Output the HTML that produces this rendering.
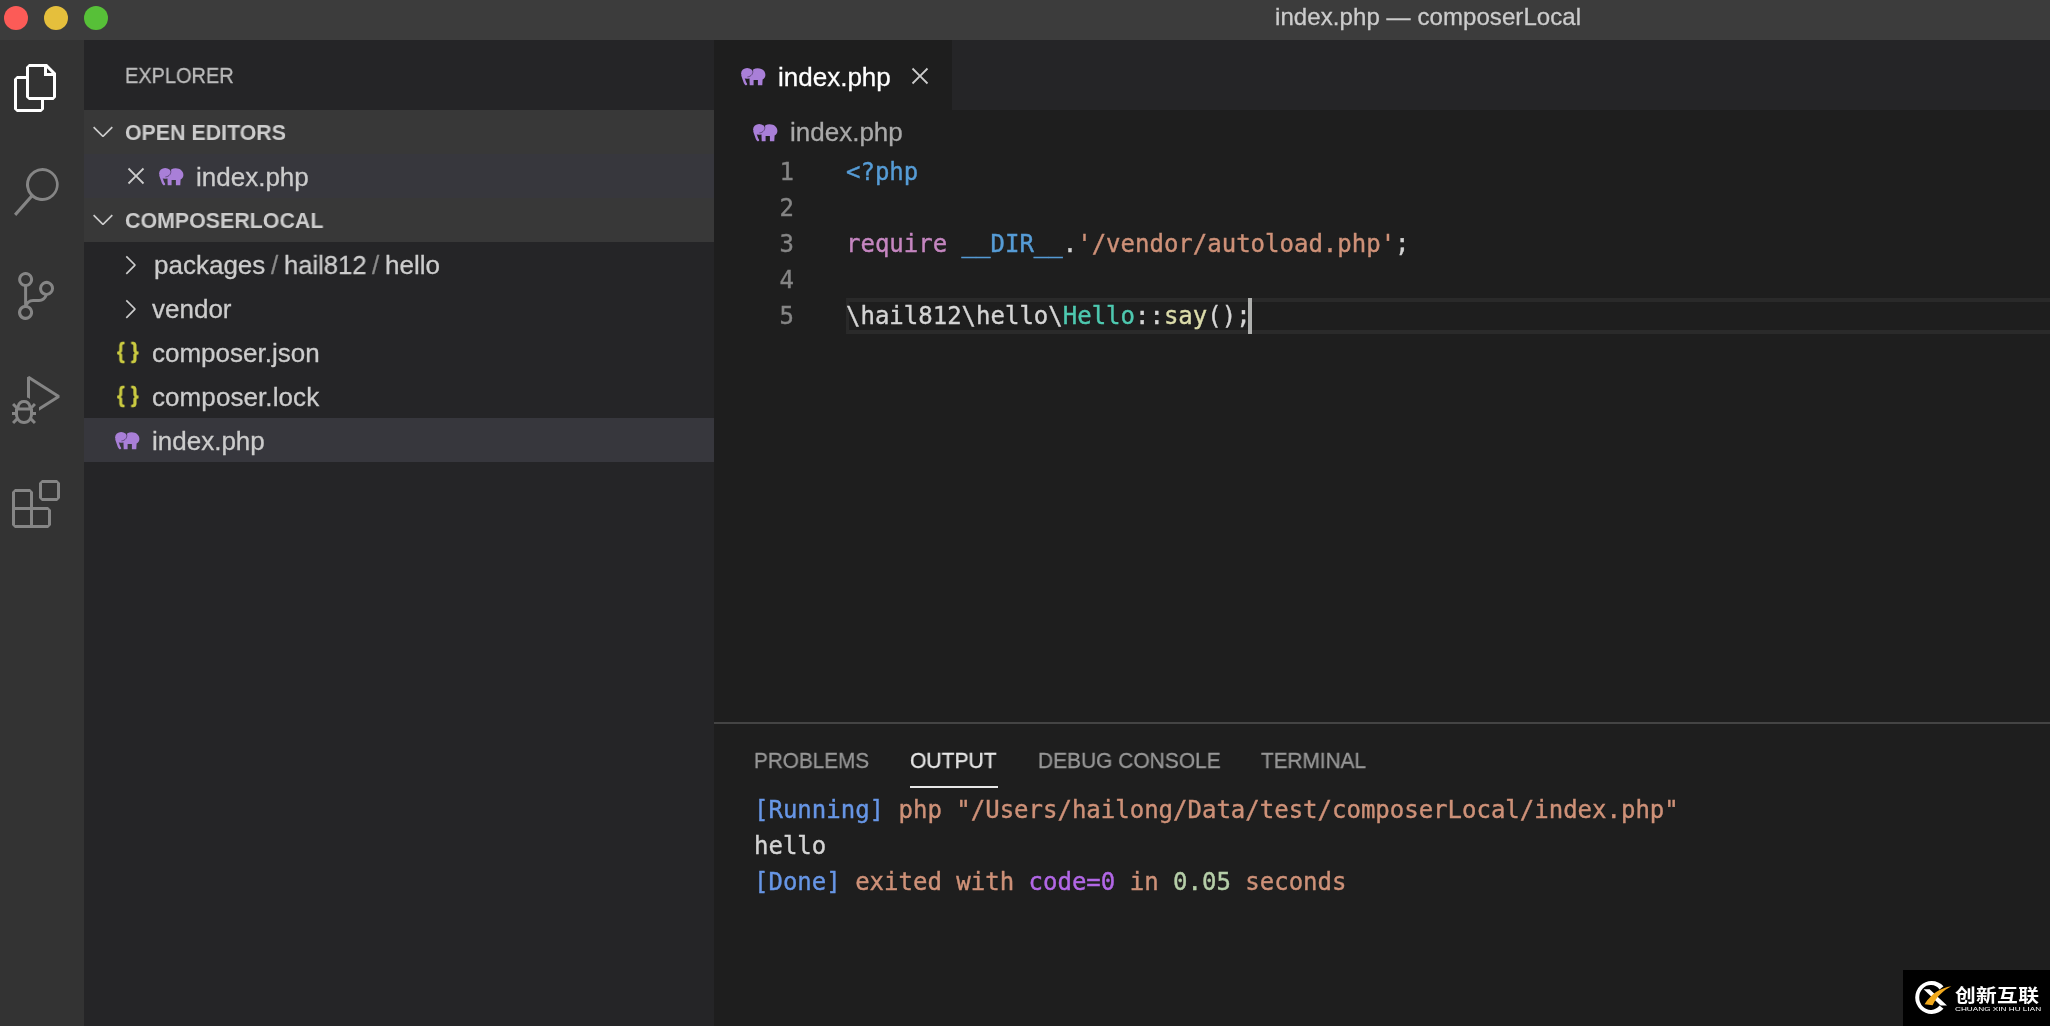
<!DOCTYPE html>
<html lang="en">
<head>
<meta charset="utf-8">
<title>index.php — composerLocal</title>
<style>
*{box-sizing:border-box;margin:0;padding:0}
html,body{width:2050px;height:1026px;overflow:hidden;background:#1e1e1e}
body{position:relative;font-family:"Liberation Sans",sans-serif;color:#cccccc;-webkit-font-smoothing:antialiased}
.abs{position:absolute}
.t,.mono,.ln{will-change:transform}
.t{position:absolute;white-space:pre;line-height:1;transform-origin:0 0}
/* regions */
#titlebar{left:0;top:0;width:2050px;height:40px;background:#3c3c3c}
#activity{left:0;top:40px;width:84px;height:986px;background:#333333}
#sidebar{left:84px;top:40px;width:630px;height:986px;background:#252527}
#sechead{left:84px;top:110px;width:630px;height:132px;background:#383838}
#selrow0{left:84px;top:154px;width:630px;height:44px;background:#37373d}
#selrow{left:84px;top:418px;width:630px;height:44px;background:#37373d}
#tabbar{left:714px;top:40px;width:1336px;height:70px;background:#252527}
#tab{left:714px;top:40px;width:238px;height:70px;background:#1e1e1e}
#panelborder{left:714px;top:722px;width:1336px;height:2px;background:#444444}
.ui{font-size:26px;color:#cccccc;-webkit-text-stroke:0.3px}
.mono,.ln{-webkit-text-stroke:0.4px}
.mono{font-family:"DejaVu Sans Mono","Liberation Mono",monospace;font-size:24px;line-height:36px;position:absolute;white-space:pre;color:#d4d4d4}
.ln{font-family:"DejaVu Sans Mono","Liberation Mono",monospace;font-size:24px;line-height:36px;position:absolute;color:#858585;width:40px;text-align:right;left:754px}
.sec{font-size:22px;font-weight:bold;color:#cccccc}
#title,#explorer,.ptab,#tabtext,#bctext{-webkit-text-stroke:0.3px}
#br1,#br2{-webkit-text-stroke:0.4px}
.ptab{font-size:22px;color:#979797}
</style>
</head>
<body>
<!-- backgrounds -->
<div class="abs" id="titlebar"></div>
<div class="abs" id="activity"></div>
<div class="abs" id="sidebar"></div>
<div class="abs" id="sechead"></div>
<div class="abs" id="selrow0"></div>
<div class="abs" id="selrow"></div>
<div class="abs" id="tabbar"></div>
<div class="abs" id="tab"></div>
<div class="abs" id="panelborder"></div>

<!-- title bar -->
<div class="abs" style="left:4px;top:6px;width:24px;height:24px;border-radius:50%;background:#fc5b57"></div>
<div class="abs" style="left:44px;top:6px;width:24px;height:24px;border-radius:50%;background:#e5bf3c"></div>
<div class="abs" style="left:84px;top:6px;width:24px;height:24px;border-radius:50%;background:#57c038"></div>
<div class="t" id="title" style="left:1274.5px;top:5px;font-size:24px;color:#cccccc;letter-spacing:0.08px">index.php — composerLocal</div>

<!-- activity icons -->
<svg class="abs" id="ic_files" style="left:12px;top:64px" width="48" height="48" viewBox="0 0 24 24"><path fill="#ffffff" d="M17.5 0h-9L7 1.5V6H2.5L1 7.5v15.07L2.5 24h12.07L16 22.57V18h4.7l1.3-1.43V4.5L17.5 0zm0 2.12l2.38 2.38H17.5V2.12zm-3 20.38h-12v-15H7v9.07L8.5 18h6v4.5zm6-6h-12v-15H16V6h4.5v10.5z"/></svg>
<svg class="abs" id="ic_search" style="left:12px;top:168px" width="48" height="48" viewBox="0 0 24 24"><path fill="#858585" d="M15.25 0a8.25 8.25 0 0 0-6.18 13.72L1 22.88l1.12 1.12 8.05-9.12A8.251 8.251 0 1 0 15.25.01V0zm0 15a6.75 6.75 0 1 1 0-13.5 6.75 6.75 0 0 1 0 13.5z"/></svg>
<svg class="abs" id="ic_scm" style="left:12px;top:272px" width="48" height="48" viewBox="0 0 24 24"><path fill="#858585" d="M21.007 8.222A3.738 3.738 0 0 0 15.045 5.2a3.737 3.737 0 0 0 1.156 6.583 2.988 2.988 0 0 1-2.668 1.67h-2.99a4.456 4.456 0 0 0-2.989 1.165V7.4a3.737 3.737 0 1 0-1.494 0v9.117a3.776 3.776 0 1 0 1.816.099 2.99 2.99 0 0 1 2.668-1.667h2.99a4.484 4.484 0 0 0 4.223-3.039 3.736 3.736 0 0 0 3.25-3.687zM4.565 3.738a2.242 2.242 0 1 1 4.484 0 2.242 2.242 0 0 1-4.484 0zm4.484 16.441a2.242 2.242 0 1 1-4.484 0 2.242 2.242 0 0 1 4.484 0zm8.221-9.715a2.242 2.242 0 1 1 0-4.485 2.242 2.242 0 0 1 0 4.485z"/></svg>
<svg class="abs" id="ic_debug" style="left:12px;top:376px" width="48" height="48" viewBox="0 0 24 24"><path fill="#858585" d="M10.94 13.5l-1.32 1.32a3.73 3.73 0 0 0-7.24 0L1.06 13.5 0 14.56l1.72 1.72-.22.22V18H0v1.5h1.5v.08c.077.489.214.966.41 1.42L0 22.94 1.06 24l1.65-1.65A4.308 4.308 0 0 0 6 24a4.31 4.31 0 0 0 3.29-1.65L10.94 24 12 22.94 10.09 21c.198-.464.336-.951.41-1.45v-.1H12V18h-1.5v-1.5l-.22-.22L12 14.56l-1.06-1.06zM6 13.5a2.25 2.25 0 0 1 2.25 2.25h-4.5A2.25 2.25 0 0 1 6 13.5zm3 6a3.33 3.33 0 0 1-3 3 3.33 3.33 0 0 1-3-3v-2.25h6v2.25zm14.76-9.9v1.26L13.5 17.37V15.6l8.5-5.37L9 2v9.46a5.07 5.07 0 0 0-1.5-.72V.63L8.64 0l15.12 9.6z"/></svg>
<svg class="abs" id="ic_ext" style="left:12px;top:480px" width="48" height="48" viewBox="0 0 24 24"><path fill="#858585" d="M13.5 1.5L15 0h7.5L24 1.5V9l-1.5 1.5H15L13.5 9V1.5zm1.5 0V9h7.5V1.5H15zM0 15V6l1.5-1.5H9L10.5 6v7.5H18l1.5 1.5v7.5L18 24H1.5L0 22.5V15zm9-1.5V6H1.5v7.5H9zM9 15H1.5v7.5H9V15zm1.5 7.5H18V15h-7.5v7.5z"/></svg>

<!-- sidebar -->
<div class="t" id="explorer" style="left:124.7px;top:65px;font-size:22px;color:#bbbbbb;transform:scaleX(0.907)">EXPLORER</div>
<div class="t sec" id="openeditors" style="left:124.6px;top:121.5px;transform:scaleX(0.970)">OPEN EDITORS</div>
<div class="t ui" id="oe_index" style="left:196px;top:164px">index.php</div>
<div class="t sec" id="composerlocal" style="left:124.6px;top:209.5px;transform:scaleX(0.972)">COMPOSERLOCAL</div>
<div class="t ui" id="packages" style="left:154px;top:252px">packages</div>
<div class="t ui" id="sl1" style="left:270.8px;top:252px;color:#8a8a8a">/</div>
<div class="t ui" id="hail" style="left:284px;top:252px;transform:scaleX(0.983)">hail812</div>
<div class="t ui" id="sl2" style="left:371.7px;top:252px;color:#8a8a8a">/</div>
<div class="t ui" id="hello" style="left:385px;top:252px">hello</div>
<div class="t ui" id="vendor" style="left:152px;top:296px">vendor</div>
<div class="t ui" id="cjson" style="left:152px;top:340px">composer.json</div>
<div class="t ui" id="clock" style="left:152px;top:384px;letter-spacing:0.08px">composer.lock</div>
<div class="t ui" id="t_index" style="left:152px;top:428px">index.php</div>

<!-- sidebar icons -->
<svg class="abs" id="ch1" style="left:87px;top:115.3px" width="32" height="32" viewBox="0 0 16 16"><path fill="#cccccc" d="M7.976 10.072l4.357-4.357.62.618L8.284 11h-.618L3 6.333l.619-.618 4.357 4.357z"/></svg>
<svg class="abs" id="ch2" style="left:87px;top:203.3px" width="32" height="32" viewBox="0 0 16 16"><path fill="#cccccc" d="M7.976 10.072l4.357-4.357.62.618L8.284 11h-.618L3 6.333l.619-.618 4.357 4.357z"/></svg>
<svg class="abs" id="ch3" style="left:115.3px;top:249.5px" width="30" height="30" viewBox="0 0 16 16"><path fill="#cccccc" d="M10.072 8.024L5.715 3.667l.618-.62L11 7.716v.618L6.333 13l-.618-.619 4.357-4.357z"/></svg>
<svg class="abs" id="ch4" style="left:115.3px;top:293.5px" width="30" height="30" viewBox="0 0 16 16"><path fill="#cccccc" d="M10.072 8.024L5.715 3.667l.618-.62L11 7.716v.618L6.333 13l-.618-.619 4.357-4.357z"/></svg>
<svg class="abs" id="cl1" style="left:121px;top:161.3px" width="30" height="30" viewBox="0 0 16 16"><path fill="#cccccc" d="M8 8.707l3.646 3.647.708-.707L8.707 8l3.647-3.646-.707-.708L8 7.293 4.354 3.646l-.707.708L7.293 8l-3.646 3.646.707.708L8 8.707z"/></svg>
<svg class="abs" id="el1" style="left:159.3px;top:167.6px" width="25" height="18" viewBox="0 0 25 18"><g fill="#a97fd8"><ellipse cx="6.2" cy="5.4" rx="6.1" ry="5.4"/><path d="M12.4 1.2C13.6.6 15.2.3 16.6.3C21.2.3 24.4 3.2 24.4 7C24.4 9 23.2 10.6 21.6 11.6L21.3 17.3H16.9V11.9H12.6V17.3H8.7L8.4 9Z"/><path d="M1.7 8L4 14.6L5 16.1" stroke="#a97fd8" stroke-width="2.4" fill="none" stroke-linecap="round"/></g><path d="M11.7 2.2C12.3 5.5 10.5 8.6 6.4 8.9" stroke="#000" stroke-opacity=".4" stroke-width="1" fill="none"/></svg>
<svg class="abs" id="el2" style="left:114.8px;top:431.5px" width="25" height="18" viewBox="0 0 25 18"><g fill="#a97fd8"><ellipse cx="6.2" cy="5.4" rx="6.1" ry="5.4"/><path d="M12.4 1.2C13.6.6 15.2.3 16.6.3C21.2.3 24.4 3.2 24.4 7C24.4 9 23.2 10.6 21.6 11.6L21.3 17.3H16.9V11.9H12.6V17.3H8.7L8.4 9Z"/><path d="M1.7 8L4 14.6L5 16.1" stroke="#a97fd8" stroke-width="2.4" fill="none" stroke-linecap="round"/></g><path d="M11.7 2.2C12.3 5.5 10.5 8.6 6.4 8.9" stroke="#000" stroke-opacity=".4" stroke-width="1" fill="none"/></svg>
<div class="t" id="br1" style="left:117px;top:340px;font-size:22px;font-weight:bold;color:#cbcb41;letter-spacing:7px;transform:scaleX(0.9)">{}</div>
<div class="t" id="br2" style="left:117px;top:384px;font-size:22px;font-weight:bold;color:#cbcb41;letter-spacing:7px;transform:scaleX(0.9)">{}</div>

<!-- tab + breadcrumb -->
<div class="t" id="tabtext" style="left:778px;top:64px;font-size:26px;color:#ffffff">index.php</div>
<div class="t" id="bctext" style="left:790px;top:119px;font-size:26px;color:#a9a9a9">index.php</div>

<!-- editor icons -->
<svg class="abs" id="el3" style="left:741px;top:67.8px" width="25" height="18" viewBox="0 0 25 18"><g fill="#a97fd8"><ellipse cx="6.2" cy="5.4" rx="6.1" ry="5.4"/><path d="M12.4 1.2C13.6.6 15.2.3 16.6.3C21.2.3 24.4 3.2 24.4 7C24.4 9 23.2 10.6 21.6 11.6L21.3 17.3H16.9V11.9H12.6V17.3H8.7L8.4 9Z"/><path d="M1.7 8L4 14.6L5 16.1" stroke="#a97fd8" stroke-width="2.4" fill="none" stroke-linecap="round"/></g><path d="M11.7 2.2C12.3 5.5 10.5 8.6 6.4 8.9" stroke="#000" stroke-opacity=".4" stroke-width="1" fill="none"/></svg>
<svg class="abs" id="el4" style="left:753px;top:123.6px" width="25" height="18" viewBox="0 0 25 18"><g fill="#a97fd8"><ellipse cx="6.2" cy="5.4" rx="6.1" ry="5.4"/><path d="M12.4 1.2C13.6.6 15.2.3 16.6.3C21.2.3 24.4 3.2 24.4 7C24.4 9 23.2 10.6 21.6 11.6L21.3 17.3H16.9V11.9H12.6V17.3H8.7L8.4 9Z"/><path d="M1.7 8L4 14.6L5 16.1" stroke="#a97fd8" stroke-width="2.4" fill="none" stroke-linecap="round"/></g><path d="M11.7 2.2C12.3 5.5 10.5 8.6 6.4 8.9" stroke="#000" stroke-opacity=".4" stroke-width="1" fill="none"/></svg>
<svg class="abs" id="cl2" style="left:905.1px;top:61px" width="30" height="30" viewBox="0 0 16 16"><path fill="#cccccc" d="M8 8.707l3.646 3.647.708-.707L8.707 8l3.647-3.646-.707-.708L8 7.293 4.354 3.646l-.707.708L7.293 8l-3.646 3.646.707.708L8 8.707z"/></svg>

<!-- editor -->
<div class="abs" id="curline" style="left:846px;top:298px;width:1204px;height:36px;border-top:4px solid #2a2a2a;border-bottom:4px solid #2a2a2a;border-left:3px solid #292929"></div>
<div class="ln" style="top:154px">1</div>
<div class="ln" style="top:190px">2</div>
<div class="ln" style="top:226px">3</div>
<div class="ln" style="top:262px">4</div>
<div class="ln" style="top:298px">5</div>
<div class="mono" id="l1" style="left:846px;top:154px"><span style="color:#569cd6">&lt;?php</span></div>
<div class="mono" id="l3" style="left:846px;top:226px"><span style="color:#c586c0">require</span> <span style="color:#569cd6">__DIR__</span>.<span style="color:#ce9178">'/vendor/autoload.php'</span>;</div>
<div class="mono" id="l5" style="left:846px;top:298px">\hail812\hello\<span style="color:#4ec9b0">Hello</span>::<span style="color:#dcdcaa">say</span>();</div>
<div class="abs" id="cursor" style="left:1248px;top:298px;width:4px;height:36px;background:#aeafad"></div>

<!-- panel -->
<div class="t ptab" id="p1" style="left:753.8px;top:749.5px;transform:scaleX(0.942)">PROBLEMS</div>
<div class="t ptab" id="p2" style="left:909.8px;top:749.5px;color:#e7e7e7;transform:scaleX(0.958)">OUTPUT</div>
<div class="t ptab" id="p3" style="left:1037.8px;top:749.5px;transform:scaleX(0.9516)">DEBUG CONSOLE</div>
<div class="t ptab" id="p4" style="left:1261px;top:749.5px;transform:scaleX(0.944)">TERMINAL</div>
<div class="abs" id="punder" style="left:910px;top:786px;width:88px;height:2px;background:#e7e7e7"></div>
<div class="mono" id="o1" style="left:754px;top:792px"><span style="color:#6796e6">[Running]</span> <span style="color:#ce9178">php "/Users/hailong/Data/test/composerLocal/index.php"</span></div>
<div class="mono" id="o2" style="left:754px;top:828px">hello</div>
<div class="mono" id="o3" style="left:754px;top:864px"><span style="color:#6796e6">[Done]</span> <span style="color:#ce9178">exited with </span><span style="color:#b267e6">code=0</span><span style="color:#ce9178"> in </span><span style="color:#b5cea8">0.05</span><span style="color:#ce9178"> seconds</span></div>

<!-- watermark -->
<div class="abs" id="wm" style="left:1903px;top:970px;width:147px;height:56px;background:#000000"></div>
<svg class="abs" id="wmlogo" style="left:1911px;top:978px" width="44" height="40" viewBox="0 0 44 40">
<path fill="#ffffff" d="M32.5 8.2A16.4 16.4 0 1 0 32.5 30.8L28.6 27.6A11.6 12.4 0 1 1 28.6 11.4Z"/>
<path fill="#ffffff" d="M12.6 11.2L18.6 11.2L36 27.6L29.6 27.6Z"/>
<path fill="#f2a91c" d="M13.6 26.2C20 16 29 10 40.4 8.2C32 12.6 25.6 18.6 21.6 27.2Z"/>
</svg>
<div class="t" id="wmcn" style="left:1955px;top:987px;font-family:'Liberation Sans','Noto Sans CJK SC',sans-serif;font-weight:bold;font-size:18.5px;letter-spacing:0.3px;color:#ffffff;transform:scaleX(1.12)">创新互联</div>
<div class="t" id="wmpy" style="left:1955px;top:1006px;font-size:6px;color:#ffffff;transform:scaleX(1.366)">CHUANG XIN HU LIAN</div>
</body>
</html>
